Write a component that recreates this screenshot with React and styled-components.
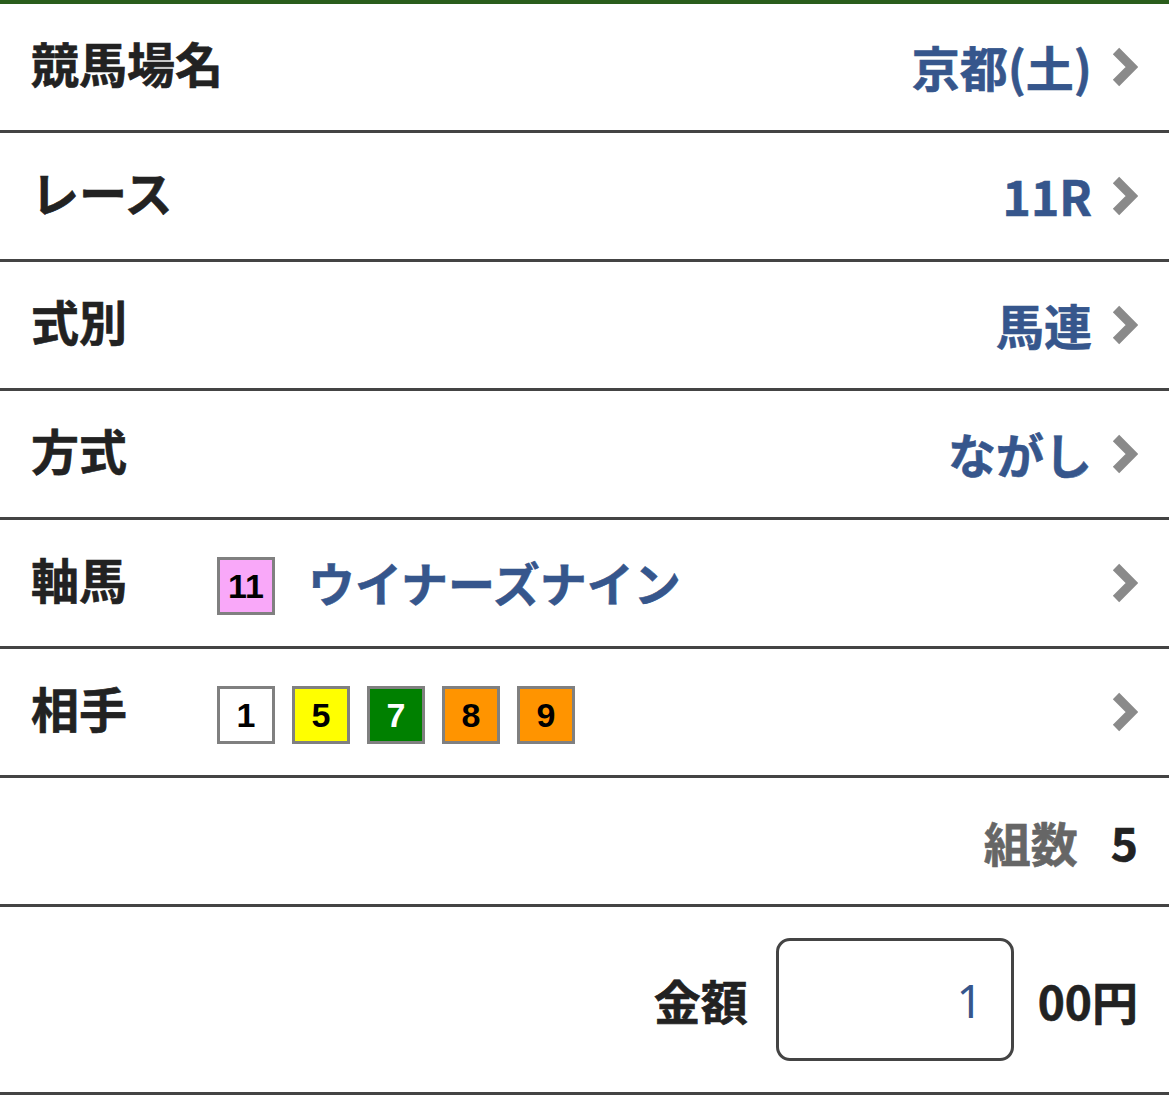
import React from "react";
import styled, { createGlobalStyle } from "styled-components";

const Global = createGlobalStyle`
  html, body { margin: 0; padding: 0; background: #fff; }
  body { font-family: "Noto Sans CJK JP", "Noto Sans", sans-serif; }
`;

const Page = styled.div`
  width: 1169px;
  border-top: 4px solid #2a5d1c;
  background: #fff;
`;

const Row = styled.div`
  display: flex;
  align-items: center;
  height: ${(p) => p.$h || 126}px;
  padding: 0 31px 0 31px;
  border-bottom: 3px solid #444;
  box-sizing: content-box;
  justify-content: ${(p) => (p.$end ? "flex-end" : "flex-start")};
`;

const Label = styled.div`
  font-family: "Noto Sans CJK JP", sans-serif;
  font-weight: 700;
  font-size: 48px;
  color: #222;
  line-height: 1;
  margin-top: -10px;
  width: ${(p) => (p.$w ? p.$w + "px" : "auto")};
  flex-shrink: 0;
  -webkit-text-stroke: 0.6px #222;
`;

const Value = styled.div`
  margin-left: auto;
  font-family: "Noto Sans CJK JP", sans-serif;
  font-weight: 700;
  font-size: 48px;
  color: #36568c;
  line-height: 1;
  margin-top: -2px;
  -webkit-text-stroke: 0.6px #36568c;
`;

const Chevron = styled.svg`
  width: 26px;
  height: 40px;
  margin-left: 20px;
  flex-shrink: 0;
`;

const Badges = styled.div`
  display: flex;
  align-items: center;
  gap: 17px;
  flex: 1;
  margin-top: 6px;
`;

const Badge = styled.div`
  width: 52px;
  height: 52px;
  border: 3px solid #808080;
  background: ${(p) => p.$bg};
  color: ${(p) => p.$fg || "#000"};
  display: flex;
  align-items: center;
  justify-content: center;
  font-family: "Liberation Sans", Arial, sans-serif;
  font-weight: 700;
  font-size: 34px;
  flex-shrink: 0;
`;

const HorseName = styled.div`
  font-family: "Noto Sans CJK JP", sans-serif;
  font-weight: 700;
  font-size: 47px;
  color: #36568c;
  line-height: 1;
  margin-left: 16px;
  margin-top: -10px;
  -webkit-text-stroke: 0.6px #36568c;
`;

const Count = styled.div`
  display: flex;
  align-items: center;
  gap: 33px;
  margin-top: 0px;
`;

const CountLabel = styled.span`
  font-family: "Noto Sans CJK JP", sans-serif;
  font-weight: 700;
  font-size: 47px;
  color: #666;
  -webkit-text-stroke: 0.6px #666;
`;

const CountNum = styled.span`
  font-family: "Noto Sans CJK JP", sans-serif;
  font-weight: 700;
  font-size: 46px;
  color: #222;
  -webkit-text-stroke: 0.6px #222;
`;

const Amount = styled.div`
  display: flex;
  align-items: center;
`;

const AmountLabel = styled.span`
  font-family: "Noto Sans CJK JP", sans-serif;
  font-weight: 700;
  font-size: 47px;
  color: #222;
  -webkit-text-stroke: 0.6px #222;
`;

const Input = styled.div`
  width: 238px;
  height: 123px;
  border: 3px solid #444;
  border-radius: 14px;
  margin: 0 24px 0 28px;
  display: flex;
  align-items: center;
  justify-content: flex-end;
  padding-right: 28px;
  box-sizing: border-box;
  font-family: "Noto Sans", sans-serif;
  font-weight: 400;
  font-size: 46px;
  color: #36568c;
`;

const Unit = styled.span`
  font-family: "Noto Sans CJK JP", sans-serif;
  font-weight: 700;
  font-size: 46px;
  color: #222;
  -webkit-text-stroke: 0.6px #222;
`;

const Arrow = () => (
  <Chevron viewBox="0 0 26 40">
    <polyline
      points="4,4 20,20 4,36"
      fill="none"
      stroke="#8a8a8a"
      strokeWidth="9"
      strokeLinejoin="miter"
    />
  </Chevron>
);

const partners = [
  { n: 1, bg: "#ffffff" },
  { n: 5, bg: "#ffff00" },
  { n: 7, bg: "#008000", fg: "#fff" },
  { n: 8, bg: "#ff9400" },
  { n: 9, bg: "#ff9400" },
];

export default function App() {
  return (
    <Page>
      <Global />
      <Row>
        <Label>競馬場名</Label>
        <Value>京都(土)</Value>
        <Arrow />
      </Row>
      <Row>
        <Label>レース</Label>
        <Value>11R</Value>
        <Arrow />
      </Row>
      <Row>
        <Label>式別</Label>
        <Value>馬連</Value>
        <Arrow />
      </Row>
      <Row>
        <Label>方式</Label>
        <Value>ながし</Value>
        <Arrow />
      </Row>
      <Row>
        <Label $w={186}>軸馬</Label>
        <Badges>
          <Badge $bg="#f9a8f9">11</Badge>
          <HorseName>ウイナーズナイン</HorseName>
        </Badges>
        <Arrow />
      </Row>
      <Row>
        <Label $w={186}>相手</Label>
        <Badges>
          {partners.map((p) => (
            <Badge key={p.n} $bg={p.bg} $fg={p.fg}>
              {p.n}
            </Badge>
          ))}
        </Badges>
        <Arrow />
      </Row>
      <Row $end>
        <Count>
          <CountLabel>組数</CountLabel>
          <CountNum>5</CountNum>
        </Count>
      </Row>
      <Row $end $h={185}>
        <Amount>
          <AmountLabel>金額</AmountLabel>
          <Input>1</Input>
          <Unit>00円</Unit>
        </Amount>
      </Row>
    </Page>
  );
}
